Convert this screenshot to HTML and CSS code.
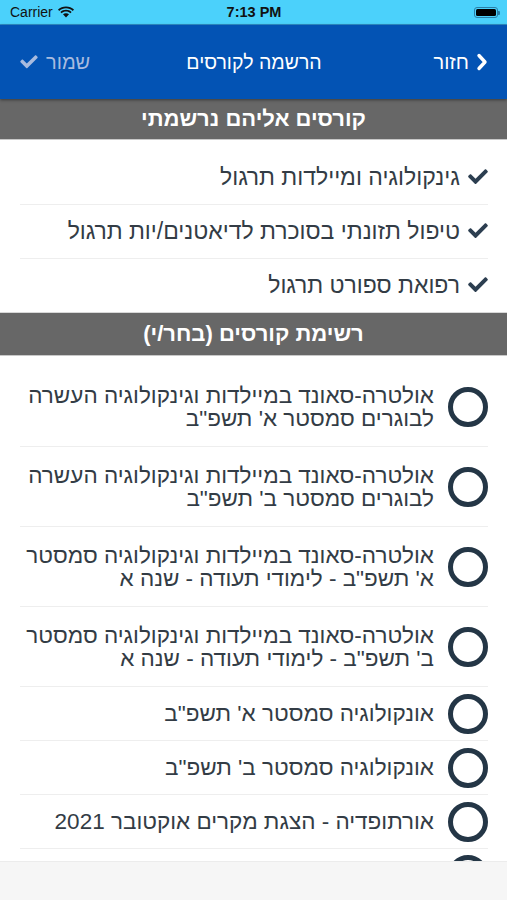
FILE: index.html
```html
<!DOCTYPE html>
<html lang="he" dir="rtl">
<head>
    <meta charset="UTF-8">
    <meta name="viewport" content="width=device-width, initial-scale=1.0">
    <title>הרשמה לקורסים</title>
    <link rel="stylesheet" href="styles.css">
</head>
<body>
    <div class="app">
        <!-- Status bar -->
        <div class="status-bar" dir="ltr">
            <div class="carrier">
                Carrier
                <svg class="wifi" width="16" height="12" viewBox="0 0 16 12">
                    <path d="M8 2.2c2.6 0 5 1 6.8 2.7l1.2-1.3C13.9 1.6 11.1.4 8 .4S2.1 1.6 0 3.6l1.2 1.3C3 3.2 5.4 2.2 8 2.2z" fill="#111"/>
                    <path d="M8 5.6c1.7 0 3.2.6 4.4 1.7l1.2-1.3C12.1 4.6 10.1 3.8 8 3.8S3.9 4.6 2.4 6l1.2 1.3C4.8 6.2 6.3 5.6 8 5.6z" fill="#111"/>
                    <path d="M8 7.2c-1.1 0-2.2.4-3 1.1L8 11.6l3-3.3c-.8-.7-1.9-1.1-3-1.1z" fill="#111"/>
                </svg>
            </div>
            <div class="clock">7:13 PM</div>
            <div class="battery"><span class="battery-level"></span></div>
        </div>

        <!-- Navigation -->
        <div class="nav-bar">
            <div class="nav-back">
                <svg width="12" height="18" viewBox="0 0 12 18">
                    <polyline points="3,2.5 9,9 3,15.5" fill="none" stroke="#fff" stroke-width="3.4" stroke-linecap="round" stroke-linejoin="round"/>
                </svg>
                <span>חזור</span>
            </div>
            <div class="nav-title">הרשמה לקורסים</div>
            <div class="nav-save">
                <span>שמור</span>
                <svg width="18" height="15" viewBox="0 0 512 440">
                    <path d="M173.9 439.4l-166.4-166.4c-10-10-10-26.2 0-36.2l36.2-36.2c10-10 26.2-10 36.2 0L192 312.7 432.1 72.6c10-10 26.2-10 36.2 0l36.2 36.2c10 10 10 26.2 0 36.2l-294.4 294.4c-10 10-26.2 10-36.2 0z" transform="translate(0,-60)" fill="currentColor"/>
                </svg>
            </div>
        </div>

        <div class="content">
            <div class="section-header">קורסים אליהם נרשמתי</div>
            <ul class="registered">
                <li class="registered-row">
                    <svg class="check" width="20" height="17" viewBox="0 0 512 440">
                        <path d="M173.9 439.4l-166.4-166.4c-10-10-10-26.2 0-36.2l36.2-36.2c10-10 26.2-10 36.2 0L192 312.7 432.1 72.6c10-10 26.2-10 36.2 0l36.2 36.2c10 10 10 26.2 0 36.2l-294.4 294.4c-10 10-26.2 10-36.2 0z" transform="translate(0,-60)"/>
                    </svg>
                    <span>גינקולוגיה ומיילדות תרגול</span>
                </li>
                <li class="registered-row">
                    <svg class="check" width="20" height="17" viewBox="0 0 512 440">
                        <path d="M173.9 439.4l-166.4-166.4c-10-10-10-26.2 0-36.2l36.2-36.2c10-10 26.2-10 36.2 0L192 312.7 432.1 72.6c10-10 26.2-10 36.2 0l36.2 36.2c10 10 10 26.2 0 36.2l-294.4 294.4c-10 10-26.2 10-36.2 0z" transform="translate(0,-60)"/>
                    </svg>
                    <span>טיפול תזונתי בסוכרת לדיאטנים/יות תרגול</span>
                </li>
                <li class="registered-row">
                    <svg class="check" width="20" height="17" viewBox="0 0 512 440">
                        <path d="M173.9 439.4l-166.4-166.4c-10-10-10-26.2 0-36.2l36.2-36.2c10-10 26.2-10 36.2 0L192 312.7 432.1 72.6c10-10 26.2-10 36.2 0l36.2 36.2c10 10 10 26.2 0 36.2l-294.4 294.4c-10 10-26.2 10-36.2 0z" transform="translate(0,-60)"/>
                    </svg>
                    <span>רפואת ספורט תרגול</span>
                </li>
            </ul>

            <div class="section-header tall">רשימת קורסים (בחר/י)</div>
            <ul class="choices">
                <li class="choice">
                    <span class="radio"></span>
                    <span class="choice-text">אולטרה-סאונד במיילדות וגינקולוגיה העשרה לבוגרים סמסטר א' תשפ"ב</span>
                </li>
                <li class="choice">
                    <span class="radio"></span>
                    <span class="choice-text">אולטרה-סאונד במיילדות וגינקולוגיה העשרה לבוגרים סמסטר ב' תשפ"ב</span>
                </li>
                <li class="choice">
                    <span class="radio"></span>
                    <span class="choice-text">אולטרה-סאונד במיילדות וגינקולוגיה סמסטר א' תשפ"ב - לימודי תעודה - שנה א</span>
                </li>
                <li class="choice">
                    <span class="radio"></span>
                    <span class="choice-text">אולטרה-סאונד במיילדות וגינקולוגיה סמסטר ב' תשפ"ב - לימודי תעודה - שנה א</span>
                </li>
                <li class="choice one-line">
                    <span class="radio"></span>
                    <span class="choice-text">אונקולוגיה סמסטר א' תשפ"ב</span>
                </li>
                <li class="choice one-line">
                    <span class="radio"></span>
                    <span class="choice-text">אונקולוגיה סמסטר ב' תשפ"ב</span>
                </li>
                <li class="choice one-line">
                    <span class="radio"></span>
                    <span class="choice-text">אורתופדיה - הצגת מקרים אוקטובר 2021</span>
                </li>
                <li class="choice one-line">
                    <span class="radio"></span>
                </li>
            </ul>
        </div>

        <div class="toolbar"></div>
    </div>
</body>
</html>
```

FILE: styles.css
```css
/* Base */
html, body {
    margin: 0;
    padding: 0;
}

body {
    font-family: 'Liberation Sans', 'DejaVu Sans', sans-serif;
    color: #333c45;
    background: #ffffff;
}

.app {
    height: 900px;
    display: flex;
    flex-direction: column;
    overflow: hidden;
}

/* Status bar */
.status-bar {
    height: 25px;
    flex-shrink: 0;
    background: #4bd1fb;
    border-bottom: 1px solid #2f8fc8;
    box-sizing: border-box;
    display: grid;
    grid-template-columns: 1fr auto 1fr;
    align-items: center;
    padding: 0 9px 0 10px;
    font-size: 14px;
    color: #111;
}

.carrier {
    display: flex;
    align-items: center;
    gap: 5px;
}

.clock {
    font-weight: bold;
    font-size: 14.5px;
}

.battery {
    justify-self: end;
    width: 24px;
    height: 11px;
    border: 1px solid #2a7fa8;
    border-radius: 3px;
    padding: 1px;
    box-sizing: border-box;
    position: relative;
    display: flex;
}

.battery::after {
    content: "";
    position: absolute;
    right: -3px;
    top: 3px;
    width: 2px;
    height: 4px;
    background: #2a7fa8;
    border-radius: 0 1px 1px 0;
}

.battery-level {
    flex: 1;
    background: #000;
    border-radius: 1.5px;
}

/* Navigation bar */
.nav-bar {
    height: 74px;
    flex-shrink: 0;
    background: #0353b4;
    box-shadow: 0 1px 3px rgba(0, 0, 0, 0.45);
    position: relative;
    z-index: 1;
    display: grid;
    grid-template-columns: 1fr auto 1fr;
    align-items: center;
    padding: 0 19px 0 20px;
    color: #ffffff;
    font-size: 20px;
}

.nav-back {
    display: flex;
    align-items: center;
    gap: 7px;
    justify-self: start;
}

.nav-title {
    font-size: 19.5px;
}

.nav-save {
    justify-self: end;
    display: flex;
    align-items: center;
    gap: 8px;
    color: #a8bbdf;
}

/* Section headers */
.section-header {
    height: 40px;
    background: #676767;
    color: #ffffff;
    font-weight: bold;
    font-size: 22px;
    display: flex;
    align-items: center;
    justify-content: center;
    border-bottom: 1px solid #c8c8c8;
}

.section-header.tall {
    height: 42px;
    border-top: 1px solid #d8d8d8;
}

.content {
    flex: 1;
    overflow: hidden;
}

ul {
    list-style: none;
    margin: 0;
    padding: 0;
}

/* Registered courses */
.registered {
    padding-top: 11px;
}

.registered-row {
    margin: 0 19px 0 20px;
    padding: 15px 0;
    line-height: 23px;
    font-size: 23px;
    display: flex;
    align-items: center;
    gap: 8px;
    border-bottom: 1px solid #eeeeee;
}

.registered-row:last-child {
    border-bottom: none;
}

.check {
    fill: #2c3e50;
    flex-shrink: 0;
}

/* Course choices */
.choices {
    padding-top: 11px;
}

.choice {
    margin: 0 19px 0 20px;
    padding: 16.5px 0;
    display: flex;
    align-items: center;
    gap: 14px;
    border-bottom: 1px solid #eeeeee;
}

.choice.one-line {
    padding: 15px 0;
}

.radio {
    width: 40px;
    height: 40px;
    margin: -9px 0;
    border: 5px solid #243646;
    border-radius: 50%;
    box-sizing: border-box;
    flex-shrink: 0;
}

.choice-text {
    font-size: 22.5px;
    line-height: 23px;
}

/* Bottom toolbar */
.toolbar {
    height: 38px;
    flex-shrink: 0;
    background: #f6f6f6;
    border-top: 1px solid #ececec;
}
```
